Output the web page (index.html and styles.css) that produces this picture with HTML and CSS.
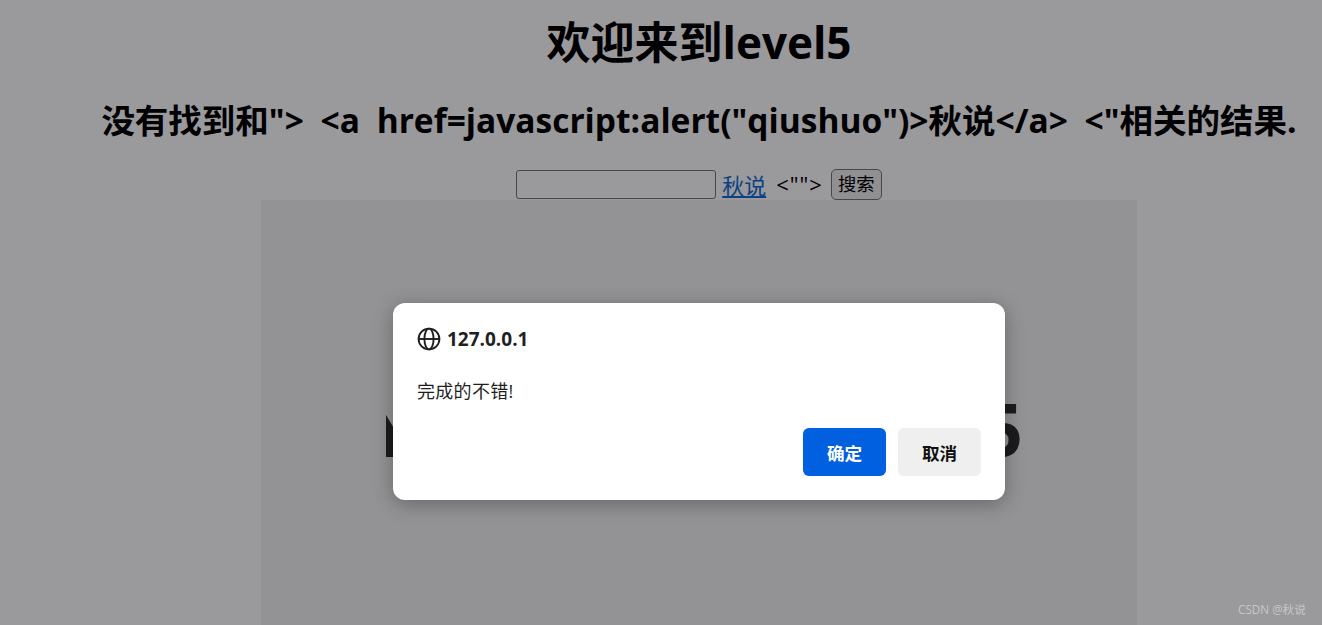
FILE: index.html
```html
<!DOCTYPE html>
<html lang="zh-CN">
<head>
    <meta charset="UTF-8">
    <title>欢迎来到level5</title>
    <link rel="stylesheet" href="styles.css">
</head>
<body>
    <div class="page">
        <h1 class="title">欢迎来到level5</h1>
        <h2 class="result">没有找到和"&gt; &lt;a href=javascript:alert("qiushuo")&gt;秋说&lt;/a&gt; &lt;"相关的结果.</h2>
        <form class="search">
            <input type="text" class="search-input">
            <a href="#" class="search-link">秋说</a>
            <span class="search-rest">&lt;""&gt;</span>
            <button type="button" class="search-btn">搜索</button>
        </form>
        <div class="banner">
            <div class="banner-inner">
                <div class="banner-stem"></div>
                <span>5</span>
            </div>
        </div>
    </div>

    <div class="overlay">
        <div class="dialog">
            <div class="dialog-head">
                <svg class="globe" width="24" height="24" viewBox="0 0 24 24" fill="none" stroke="#1f1f1f" stroke-width="1.9">
                    <circle cx="12" cy="12" r="10.4"/>
                    <ellipse cx="12" cy="12" rx="4.6" ry="10.4"/>
                    <path d="M1.6 12h20.8"/>
                </svg>
                <span>127.0.0.1</span>
            </div>
            <p class="dialog-msg">完成的不错!</p>
            <div class="dialog-actions">
                <button type="button" class="btn btn-ok">确定</button>
                <button type="button" class="btn btn-cancel">取消</button>
            </div>
        </div>
    </div>

    <div class="mark">CSDN @秋说</div>
</body>
</html>
```

FILE: styles.css
```css
html, body {
    margin: 0;
    height: 625px;
    overflow: hidden;
    background: #fff;
}
body {
    position: relative;
    font-family: "Open Sans", "Noto Sans CJK SC", sans-serif;
    color: #000;
}
.page {
    width: 1398px;
    height: 625px;
    overflow: hidden;
    text-align: center;
}
.title {
    margin: 0;
    padding-top: 12px;
    font-size: 44px;
    line-height: 60px;
    font-weight: 700;
}
.result {
    margin: 26px 0 0;
    font-size: 33.5px;
    line-height: 45px;
    font-weight: 700;
    word-spacing: 8px;
}
.search {
    margin-top: 26px;
    height: 31px;
    display: flex;
    justify-content: center;
    align-items: center;
    gap: 8px;
    font-size: 22px;
}
.search-input {
    width: 200px;
    height: 29px;
    padding: 0;
    box-sizing: border-box;
    border: 1px solid #767676;
    border-radius: 3px;
    background: #fff;
}
.search-link {
    margin: 0 2px 2px -2px;
    color: #0f6fd8;
}
.search-rest {
    margin-bottom: 2px;
    letter-spacing: 1px;
}
.search-btn {
    width: 51px;
    height: 31px;
    padding: 0;
    font-family: inherit;
    font-size: 18.3px;
    line-height: 1;
    border: 1px solid #767676;
    border-radius: 5px;
    background: #efefef;
}
.banner {
    width: 876px;
    height: 500px;
    margin: 0 auto;
    display: flex;
    justify-content: center;
    padding: 201px 0 0 11px;
    box-sizing: border-box;
    background: #f3f3f4;
}
.banner-inner {
    width: 637px;
    height: 56px;
    display: flex;
    justify-content: space-between;
    align-items: flex-end;
    font-size: 73px;
    line-height: 56px;
    font-weight: 700;
    color: #2e2e2e;
}
.banner-stem {
    width: 12px;
    height: 42px;
    background: #2e2e2e;
    clip-path: polygon(0 0, 100% 20px, 100% 100%, 0 100%);
}
.overlay {
    position: absolute;
    top: 0;
    left: 0;
    width: 1398px;
    height: 625px;
    background: rgba(3, 1, 6, .4);
}
.dialog {
    position: absolute;
    top: 303px;
    left: 393px;
    width: 612px;
    height: 197px;
    padding: 24px;
    box-sizing: border-box;
    background: #fff;
    border-radius: 12px;
    box-shadow: 0 4px 20px rgba(0, 0, 0, .3);
}
.dialog-head {
    height: 24px;
    display: flex;
    align-items: center;
    gap: 6px;
    font-size: 19px;
    font-weight: 700;
    color: #1f1f1f;
}
.dialog-msg {
    margin: 28px 0 0;
    font-size: 18px;
    line-height: 24px;
    letter-spacing: .3px;
    color: #1f1f1f;
}
.dialog-actions {
    margin-top: 25px;
    display: flex;
    justify-content: flex-end;
    gap: 12px;
}
.btn {
    width: 83px;
    height: 48px;
    border: 0;
    border-radius: 6px;
    font-family: inherit;
    font-size: 17.6px;
    font-weight: 700;
}
.btn-ok {
    background: #0060df;
    color: #fff;
}
.btn-cancel {
    background: #efefef;
    color: #111;
}
.mark {
    position: absolute;
    right: 16px;
    bottom: 8px;
    font-size: 11.7px;
    color: #c8c8c8;
}
```
